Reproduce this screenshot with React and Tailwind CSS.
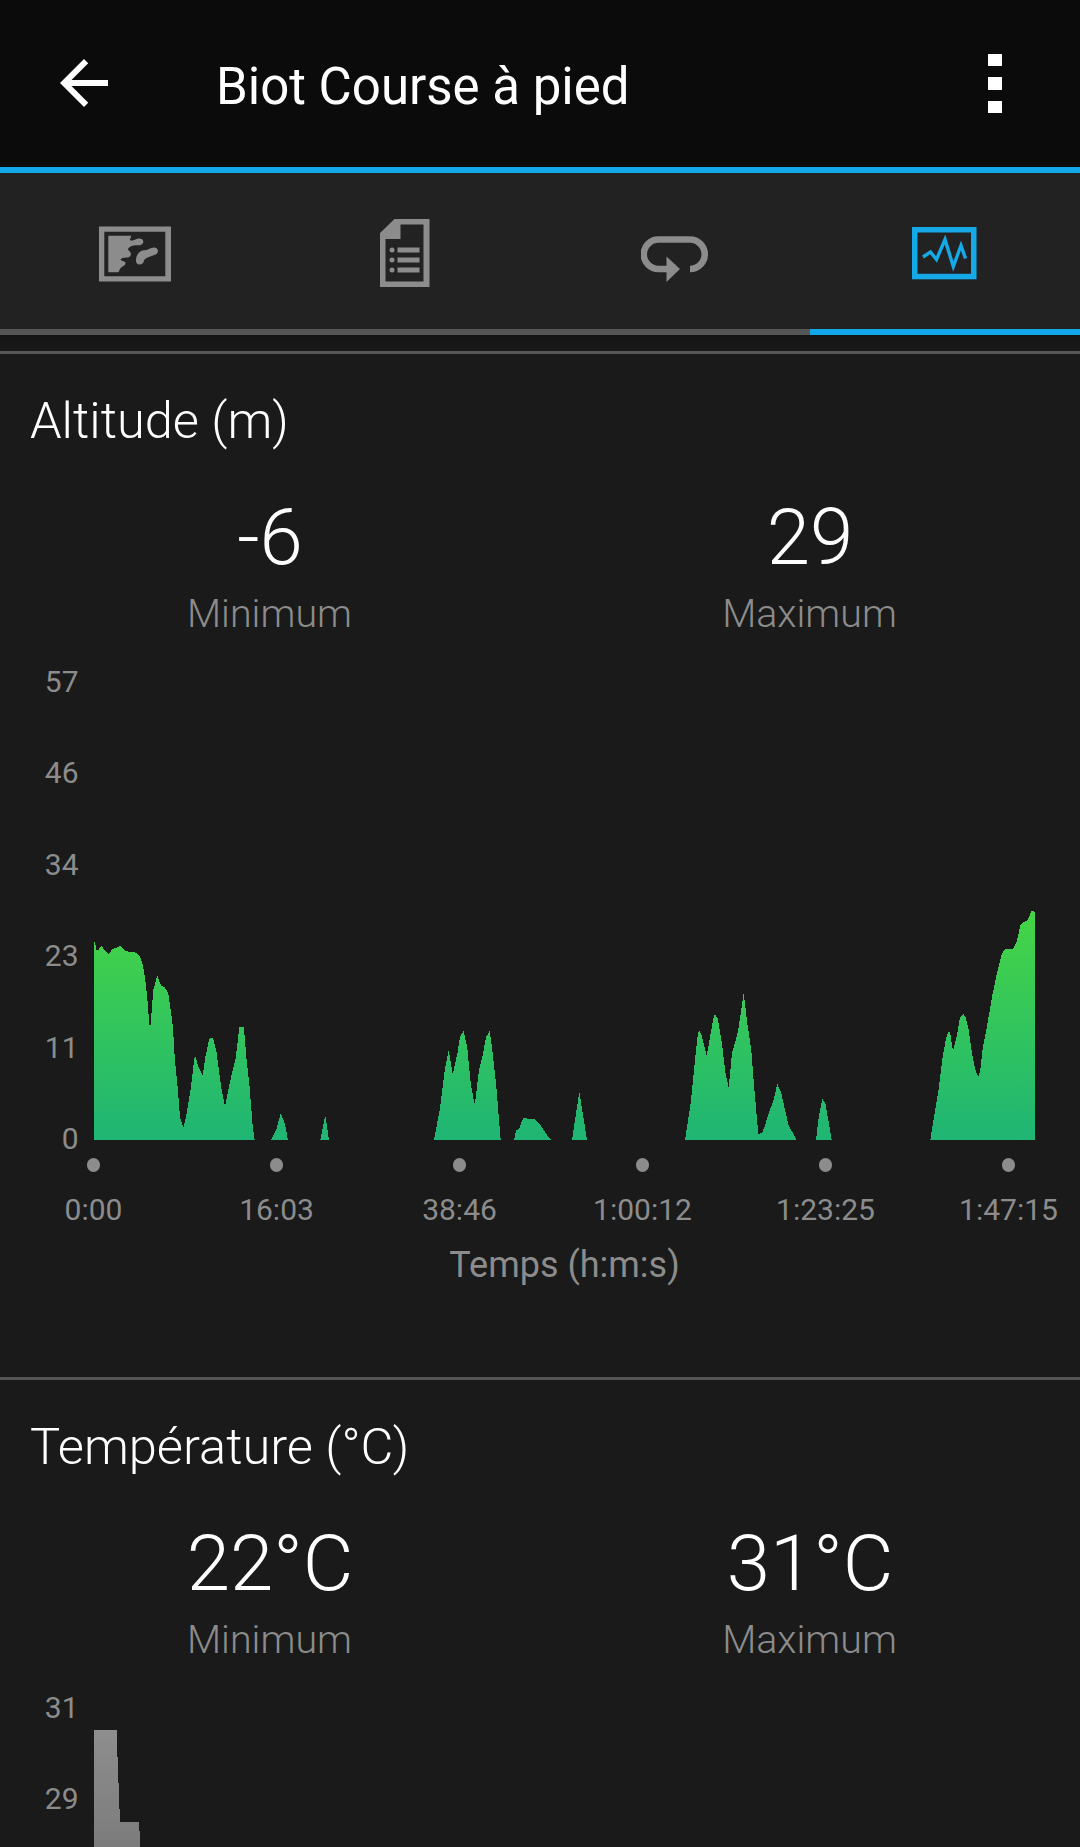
import React from 'react';

// height above the axis, in px, at each x of the 941px wide plot
const ALTITUDE = [
  [[0, 0], [0, 199], [1, 197], [2.7, 189.3], [4, 189.7], [7.3, 194], [10.7, 190], [14.7, 186.3], [18.7, 191], [23.3, 192.7], [26.3, 194], [32, 189], [36, 188], [40.7, 188], [43.3, 186.3], [45.7, 184.3], [48.7, 175], [50.7, 164.3], [52.3, 151.7], [54, 133.3], [55.3, 115.3], [56.7, 115.3], [58, 133.3], [59.3, 150], [61.7, 158.7], [63.3, 164.7], [66, 157], [67.7, 154], [70.3, 153], [72.3, 150], [74.3, 146.7], [76.7, 130], [79, 111.7], [81, 78.3], [83.3, 56.7], [86, 22.7], [89, 13.3], [89.7, 13.3], [92.3, 25], [97, 53.3], [100.3, 81.3], [101.7, 83.3], [104.3, 73.3], [108.7, 64.7], [111.3, 82.7], [115.3, 101.3], [117, 102.3], [119.3, 101.3], [122.7, 86.7], [127.3, 51.7], [131, 34], [136, 58.3], [141.7, 81.7], [145.3, 112.7], [149, 113.3], [150, 111.7], [152.7, 78.3], [155.3, 56.7], [158.7, 13.3], [160.7, 0]],
  [[177, 0], [182.7, 11.7], [186.7, 27], [190.7, 16.7], [194, 0]],
  [[226.3, 0], [231.3, 24.7], [235, 0]],
  [[340, 0], [346, 31.7], [351, 71.7], [354.7, 90], [358.7, 65.7], [363.3, 86], [366, 103.3], [369.7, 109.3], [373.3, 91.7], [376.7, 56.7], [380.3, 36.7], [381, 36.7], [385, 70], [388.7, 85], [392, 102.7], [395.7, 109.3], [398.7, 86.7], [402, 56.7], [406.7, 0]],
  [[420, 0], [422, 9.3], [425.3, 11.3], [429, 21.7], [432, 22.3], [434.3, 21], [440.3, 21.3], [446, 15.7], [451.7, 6.7], [457, 0]],
  [[478, 0], [485.3, 48.3], [493, 0]],
  [[591, 0], [596.7, 36.7], [601, 80], [604, 107.3], [605.3, 109.3], [607.3, 106], [612.7, 84], [616.7, 106.7], [620, 125], [621, 125.7], [623.7, 121.7], [627.7, 98.3], [631.7, 65], [634.7, 52.7], [638, 86.7], [644, 108.3], [649.7, 147.3], [653.3, 116.7], [657.3, 90], [660, 55], [664.3, 6], [668, 7], [670, 11.7], [675.3, 28.3], [679.7, 40], [683.3, 56], [687.3, 46.7], [694.3, 15.7], [699.3, 6], [702.7, 0]],
  [[722, 0], [725, 25], [728.3, 41], [731.3, 36.7], [734.3, 20], [737.7, 0]],
  [[836.3, 0], [840, 23.3], [844.3, 48.3], [848.7, 83.3], [852, 101.7], [854.7, 109], [856, 108], [859, 89], [862.7, 103.3], [866, 122.7], [869.3, 126], [871.3, 123.3], [874.7, 110], [878.3, 85], [882, 67.3], [884.7, 63.3], [886.3, 70], [888.7, 91.7], [892.7, 111.7], [898, 143.3], [903.3, 168.3], [908, 186.7], [911.3, 190.7], [919, 191.3], [922.7, 198.3], [926.3, 214.3], [929.3, 217.7], [933.7, 220], [937.3, 228.7], [939, 229], [941, 227.7], [941, 0]],
];

const TEMPERATURE = [
  [[0, 0], [0, 436], [22.5, 436], [26, 344], [45, 344], [50, 260], [50, 0]],
];

const PLOT_HEIGHT = 458;
const TIMES = ['0:00', '16:03', '38:46', '1:00:12', '1:23:25', '1:47:15'];

function MapIcon() {
  return (
    <svg width="72" height="56" viewBox="0 0 72 56" fill="#8c8c8c">
      <path fillRule="evenodd" d="M0 .5h72v55H0zM5.3 5.8v44.4h61V5.8z" />
      <path d="M9.3 9.7h23l-1.5 4.3c2 1.3 4.5 0 7-1 3-1.2 6.5 0 6.5 2.7 0 3-3.5 3.8-6.5 3.6-4 0-7.8 1.2-9 4.2 1.5 1.5 3.5 2.500 3 5.500-1 3-5 2.500-8.300 3l-2.200 1.500c1.500 2 5.500 1.500 5.200 4-.3 2.300-3.500 2.800-4.800 4.500-1.500 1.700-1.200 3.600-2.400 4.200h-10z" />
      <path d="M40.5 38.5c-3 0-3.800-2.300-3.500-5 .5-5 3.500-9 8-9.300 3.500 0 5.500-2 9-2.500 3-.5 5 1 4.900 3.500-.2 3.500-4 3.600-7 5-4 1.700-6 1.800-7 4.800-.7 2-1.600 3.500-4.400 3.500z" />
    </svg>
  );
}

function DetailsIcon() {
  return (
    <svg width="50" height="68" viewBox="0 0 50 68" fill="#8c8c8c">
      <path fillRule="evenodd" d="M14.5 0H49.5v68H0V14zM20.5 5.500V20H5.500v42.500h38V5.500z" />
      <circle cx="12" cy="31" r="2.5" />
      <circle cx="12" cy="41" r="2.5" />
      <circle cx="12" cy="51" r="2.5" />
      <path d="M17.5 28.5h22v5h-22zM17.5 38.5h22v5h-22zM17.5 48.5h22v5h-22z" />
    </svg>
  );
}

function LapsIcon() {
  return (
    <svg width="68" height="46" viewBox="0 0 68 46">
      <path d="M26 33H17.5a14.7 14.7 0 0 1 0-29.5H49a14.7 14.7 0 0 1 0 29.5" fill="none" stroke="#8c8c8c" strokeWidth="6.6" />
      <path d="M25.5 20.5v25.500l13.500-13z" fill="#8c8c8c" />
    </svg>
  );
}

function GraphIcon() {
  return (
    <svg width="65" height="53" viewBox="0 0 65 53" fill="none" stroke="#16a9e8">
      <rect x="2.75" y="2.75" width="59" height="46.8" strokeWidth="5.5" />
      <path d="M11 30l7.500-5 6 7.500 8.500-20 8.300 27 7.700-21 4.500 13" strokeWidth="3.4" />
    </svg>
  );
}

const TABS = [
  { id: 'map', Icon: MapIcon, pad: 'pt-[52.5px]' },
  { id: 'details', Icon: DetailsIcon, pad: 'pt-[46px] pr-px' },
  { id: 'laps', Icon: LapsIcon, pad: 'pt-[63px]' },
  { id: 'graphs', Icon: GraphIcon, pad: 'pt-[54px] pr-[2px]', active: true },
];

function Stat({ value, label }) {
  return (
    <div className="text-center">
      <div className="text-[78px] leading-[80px] text-white">{value}</div>
      <div className="mr-px mt-[12px] text-[39.4px] leading-[48px] text-[#8c8c8c]">{label}</div>
    </div>
  );
}

function AreaPlot({ id, areas, from, to, top }) {
  return (
    <svg
      width="941"
      height={PLOT_HEIGHT}
      viewBox={`0 0 941 ${PLOT_HEIGHT}`}
      shapeRendering="crispEdges"
      className="shrink-0"
    >
      <defs>
        <linearGradient id={id} gradientUnits="userSpaceOnUse" x1="0" y1={PLOT_HEIGHT - top} x2="0" y2={PLOT_HEIGHT}>
          <stop offset="0" stopColor={from} />
          <stop offset="1" stopColor={to} />
        </linearGradient>
      </defs>
      {areas.map((pts, i) => (
        <polygon key={i} fill={`url(#${id})`} points={pts.map(([x, h]) => `${x},${PLOT_HEIGHT - h}`).join(' ')} />
      ))}
    </svg>
  );
}

function TimeAxis() {
  return (
    <>
      <div className="ml-[2px] mt-px grid w-[1098px] grid-cols-6 font-normal">
        {TIMES.map((t) => (
          <div key={t} className="flex flex-col items-center text-[30px] leading-[36px] text-[#8c8c8c]">
            <span className="mb-[20.5px] size-[13.5px] rounded-full bg-[#8c8c8c]" />
            {t}
          </div>
        ))}
      </div>
      <p className="ml-[94px] mt-[17px] w-[941px] text-center text-[36px] font-normal leading-[40px] text-[#8c8c8c]">
        Temps (h:m:s)
      </p>
    </>
  );
}

function GraphSection({ title, min, max, ticks, showTimes, children }) {
  return (
    <section className="h-[1026px] shrink-0 border-t-[3px] border-[#565656] pt-[37px] font-light">
      <h2 className="pl-[30px] text-[50.6px] leading-[60px] text-white">{title}</h2>
      <div className="mt-[47px] grid grid-cols-2">
        <Stat value={min} label="Minimum" />
        <Stat value={max} label="Maximum" />
      </div>
      <div className="mt-[26px] flex h-[493px] font-normal">
        <div className="mr-[15.5px] flex w-[78.5px] flex-col gap-[55.4px] text-right text-[30px] leading-[36px] text-[#8c8c8c]">
          {ticks.map((t) => (
            <span key={t}>{t}</span>
          ))}
        </div>
        <div className="pt-[18px]">{children}</div>
      </div>
      {showTimes && <TimeAxis />}
    </section>
  );
}

export default function App() {
  return (
    <div className="flex h-[1847px] w-[1080px] flex-col overflow-hidden bg-[#1a1a1a] font-[Roboto,sans-serif]">
      <header className="flex h-[173px] shrink-0 items-center border-b-[6px] border-[#12a7e8] bg-[#0b0b0b] pl-[48px] pr-[78px] text-white">
        <svg className="mb-px" width="72" height="72" viewBox="0 0 24 24" fill="currentColor">
          <path d="M20 11H7.83l5.59-5.59L12 4l-8 8 8 8 1.41-1.41L7.83 13H20v-2z" />
        </svg>
        <h1 className="ml-[96px] flex-1 pt-[6px] text-[51px] leading-[60px]">Biot Course à pied</h1>
        <div className="flex flex-col gap-[11px]">
          <span className="h-[12.5px] w-[14px] bg-white" />
          <span className="h-[12.5px] w-[14px] bg-white" />
          <span className="h-[12.5px] w-[14px] bg-white" />
        </div>
      </header>

      <nav className="grid h-[162px] shrink-0 grid-cols-4 bg-[#222222]">
        {TABS.map(({ id, Icon, pad, active }) => (
          <button
            key={id}
            className={`flex items-start justify-center border-b-[6px] ${pad} ${active ? 'border-[#12a7e8]' : 'border-[#565656]'}`}
          >
            <Icon />
          </button>
        ))}
      </nav>
      <div className="h-4 shrink-0 bg-linear-to-b from-[#141414] to-[#1a1a1a]" />

      <GraphSection title="Altitude (m)" min="-6" max="29" ticks={[57, 46, 34, 23, 11, 0]} showTimes>
        <AreaPlot id="altitude" areas={ALTITUDE} from="#46d545" to="#1fb574" top={229} />
      </GraphSection>
      <GraphSection title="Température (°C)" min="22°C" max="31°C" ticks={[31, 29]}>
        <AreaPlot id="temperature" areas={TEMPERATURE} from="#8e8e8e" to="#4a4a4a" top={436} />
      </GraphSection>
    </div>
  );
}
